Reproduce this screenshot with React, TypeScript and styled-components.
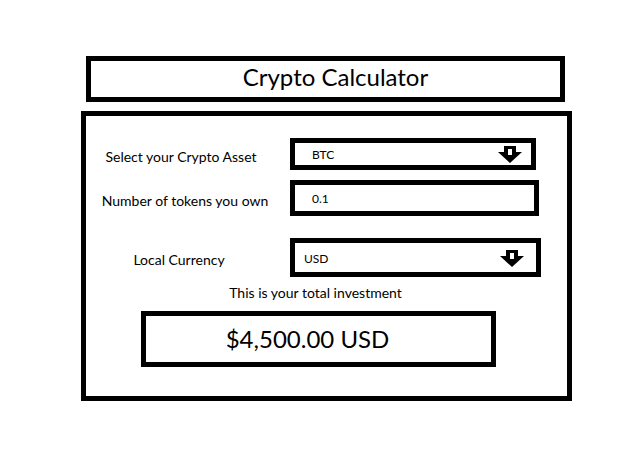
import React from "react";
import styled, { createGlobalStyle } from "styled-components";

/* page reset ------------------------------------------------------ */
const Global = createGlobalStyle`
  html, body {
    margin: 0;
    background: #fff;
    font-family: Lato, "Open Sans", sans-serif;
    color: #000;
  }
  * { box-sizing: border-box; }
`;

const LINE = 5; // hand-drawn border weight (px)

/* shells ---------------------------------------------------------- */
const Page = styled.div`
  display: flex;
  flex-direction: column;
  padding-top: 56px;
  width: 638px;
  height: 458px;
`;

const TitleBox = styled.div`
  margin-left: 86px;
  width: 479px;
  height: 46px;
  border: ${LINE}px solid #000;
  display: flex;
  align-items: center;
  justify-content: center;
  font-size: 24px;
  padding: 0 0 6px 20px;
`;

const Panel = styled.div`
  margin: 9px 0 0 81px;
  width: 491px;
  height: 290px;
  border: ${LINE}px solid #000;
  display: flex;
  flex-direction: column;
  padding-top: 22px;
`;

/* form rows ------------------------------------------------------- */
const Row = styled.div<{ $gap: number }>`
  display: grid;
  grid-template-columns: 204px auto;
  align-items: center;
  margin-top: ${(p) => p.$gap}px;
`;

const Label = styled.div<{ $shift?: number }>`
  font-size: 14px;
  text-align: center;
  padding-top: 4px;
  padding-right: ${(p) => 14 - (p.$shift ?? 0) * 2}px;
`;

const Field = styled.div<{ $w: number; $h: number; $pl: number; $pr: number }>`
  width: ${(p) => p.$w}px;
  height: ${(p) => p.$h}px;
  border: ${LINE}px solid #000;
  display: flex;
  align-items: center;
  justify-content: space-between;
  padding: 1px ${(p) => p.$pr}px 0 ${(p) => p.$pl}px;
  font-size: 12px;
`;

const Caption = styled.div`
  margin-top: 6px;
  line-height: 20px;
  font-size: 14px;
  text-align: center;
  padding-right: 22px;
`;

const ResultBox = styled.div`
  margin: 8px 0 0 55px;
  width: 355px;
  height: 56px;
  border: ${LINE}px solid #000;
  display: flex;
  align-items: center;
  justify-content: center;
  font-size: 24px;
  padding: 0 22px 2px 0;
`;

/* the chunky paint-style down arrow -------------------------------- */
const DownArrow = () => (
  <svg width="24" height="17" viewBox="0 0 24 17">
    <polygon points="6,0 18,0 18,6 24,6 12,17 0,6 6,6" fill="#000" />
    <rect x="10" y="3" width="4" height="6" fill="#fff" />
  </svg>
);

export default function App() {
  return (
    <>
      <Global />
      <Page>
        <TitleBox>Crypto Calculator</TitleBox>
        <Panel>
          <Row $gap={0}>
            <Label>Select your Crypto Asset</Label>
            <Field $w={246} $h={32} $pl={17} $pr={9}>
              <span>BTC</span>
              <DownArrow />
            </Field>
          </Row>
          <Row $gap={10}>
            <Label $shift={4}>Number of tokens you own</Label>
            <Field $w={249} $h={36} $pl={17} $pr={9}>
              <span>0.1</span>
            </Field>
          </Row>
          <Row $gap={22}>
            <Label $shift={-2}>Local Currency</Label>
            <Field $w={251} $h={39} $pl={9} $pr={12}>
              <span>USD</span>
              <DownArrow />
            </Field>
          </Row>
          <Caption>This is your total investment</Caption>
          <ResultBox>$4,500.00 USD</ResultBox>
        </Panel>
      </Page>
    </>
  );
}
